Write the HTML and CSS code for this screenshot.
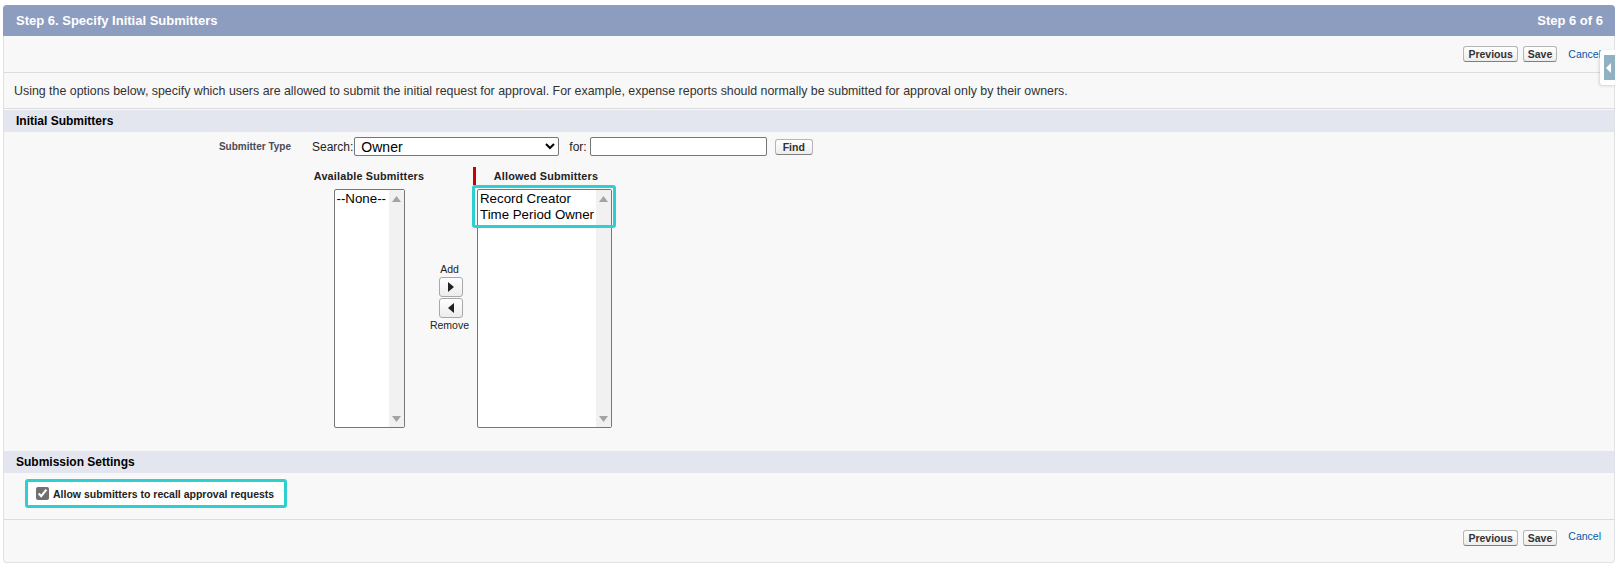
FILE: index.html
```html
<!DOCTYPE html>
<html lang="en">
<head>
    <meta charset="UTF-8">
    <title>Step 6. Specify Initial Submitters</title>
    <link rel="stylesheet" href="styles.css">
</head>
<body>
    <div class="wizard">
        <div class="wizard-head">
            <span>Step 6. Specify Initial Submitters</span>
            <span>Step 6 of 6</span>
        </div>

        <div class="actions">
            <button class="btn">Previous</button>
            <button class="btn">Save</button>
            <a class="cancel" href="#">Cancel</a>
        </div>

        <div class="intro">
            Using the options below, specify which users are allowed to submit the initial request for approval. For example, expense reports should normally be submitted for approval only by their owners.
        </div>

        <div class="section-head">Initial Submitters</div>
        <div class="section-body">
            <div class="field-row">
                <div class="field-label">Submitter Type</div>
                <div class="field-data">
                    <div class="search-line">
                        <label for="search">Search:</label>
                        <select id="search" class="search-select">
                            <option>Owner</option>
                        </select>
                        <label for="for-text" class="for-label">for:</label>
                        <input id="for-text" class="for-input" type="text">
                        <button class="btn btn-find">Find</button>
                    </div>

                    <div class="dual-list">
                        <div class="col-avail">
                            <div class="list-title">Available Submitters</div>
                            <div class="listbox listbox-avail">
                                <div class="list-items">
                                    <div>--None--</div>
                                </div>
                                <div class="list-scroll">
                                    <svg width="9" height="6" viewBox="0 0 9 6"><path d="M0 6 L4.5 0 L9 6 Z" fill="#a3a3a3"/></svg>
                                    <svg width="9" height="6" viewBox="0 0 9 6"><path d="M0 0 L4.5 6 L9 0 Z" fill="#a3a3a3"/></svg>
                                </div>
                            </div>
                        </div>

                        <div class="col-move">
                            <div class="move-label">Add</div>
                            <button class="move-btn" title="Add">
                                <svg width="6" height="10" viewBox="0 0 6 10"><path d="M0 0 L6 5 L0 10 Z" fill="#222"/></svg>
                            </button>
                            <button class="move-btn" title="Remove">
                                <svg width="6" height="10" viewBox="0 0 6 10"><path d="M6 0 L0 5 L6 10 Z" fill="#222"/></svg>
                            </button>
                            <div class="move-label">Remove</div>
                        </div>

                        <div class="col-allowed">
                            <div class="list-title required">Allowed Submitters</div>
                            <div class="listbox listbox-allowed">
                                <div class="list-items">
                                    <div>Record Creator</div>
                                    <div>Time Period Owner</div>
                                </div>
                                <div class="list-scroll">
                                    <svg width="9" height="6" viewBox="0 0 9 6"><path d="M0 6 L4.5 0 L9 6 Z" fill="#a3a3a3"/></svg>
                                    <svg width="9" height="6" viewBox="0 0 9 6"><path d="M0 0 L4.5 6 L9 0 Z" fill="#a3a3a3"/></svg>
                                </div>
                                <div class="highlight highlight-list"></div>
                            </div>
                        </div>
                    </div>
                </div>
            </div>
        </div>

        <div class="section-head">Submission Settings</div>
        <div class="settings-body">
            <label class="highlight-check">
                <input type="checkbox" checked>
                <span>Allow submitters to recall approval requests</span>
            </label>
        </div>

        <div class="actions actions-bottom">
            <button class="btn">Previous</button>
            <button class="btn">Save</button>
            <a class="cancel" href="#">Cancel</a>
        </div>

        <div class="side-tab">
            <div class="side-tab-inner">
                <svg width="5" height="10" viewBox="0 0 5 10"><path d="M5 0 L0 5 L5 10 Z" fill="#fff"/></svg>
            </div>
        </div>
    </div>
</body>
</html>
```

FILE: styles.css
```css
:root {
    --head: #8d9dc0;
    --section: #e3e6ef;
    --panel: #f8f8f8;
    --line: #dcdcdc;
    --teal: #2ecfd0;
    --link: #015ba7;
}

body {
    margin: 0;
    padding: 5px 5px 0 3px;
    font-family: "Liberation Sans", Arial, sans-serif;
    font-size: 12px;
    color: #333;
    background-color: #fff;
}

.wizard {
    position: relative;
    height: 558px;
    box-sizing: border-box;
    border: 1px solid #e0e2e5;
    border-top: none;
    border-radius: 4px;
    background-color: var(--panel);
}

.wizard-head {
    height: 31px;
    margin: 0 -1px;
    padding: 0 12px 0 13px;
    display: flex;
    justify-content: space-between;
    align-items: center;
    background-color: var(--head);
    color: #fff;
    font-size: 13px;
    font-weight: bold;
    border-radius: 4px 4px 0 0;
}

.actions {
    height: 36px;
    padding-right: 13px;
    display: flex;
    justify-content: flex-end;
    align-items: center;
    border-bottom: 1px solid var(--line);
}

.actions-bottom {
    height: 42px;
    align-items: flex-start;
    padding-top: 10px;
    box-sizing: border-box;
    border-bottom: none;
}

.btn {
    height: 16px;
    padding: 0 4px;
    margin-left: 5px;
    font-family: inherit;
    font-size: 10.5px;
    font-weight: bold;
    color: #333;
    border: 1px solid #b5b5b5;
    border-bottom-color: #7f7f7f;
    border-radius: 3px;
    background: linear-gradient(#fff, #ededed);
    cursor: pointer;
    line-height: 14px;
}

.cancel {
    margin-left: 11px;
    font-size: 10.5px;
    color: var(--link);
    text-decoration: none;
}

.intro {
    height: 35px;
    padding-left: 10px;
    display: flex;
    align-items: center;
    border-bottom: 1px solid var(--line);
    font-size: 12.4px;
    color: #333;
}

.section-head {
    height: 22px;
    padding-left: 12px;
    display: flex;
    align-items: center;
    background-color: var(--section);
    font-size: 12px;
    font-weight: bold;
    color: #000;
}

.intro + .section-head {
    margin-top: 1px;
}

.section-body {
    height: 319px;
    box-sizing: border-box;
    padding-top: 5px;
}

.field-row {
    display: flex;
}

.field-label {
    width: 296px;
    box-sizing: border-box;
    padding: 4px 9px 0 0;
    text-align: right;
    font-size: 10px;
    font-weight: bold;
    color: #4a4a56;
}

.field-data {
    padding-left: 12px;
}

.search-line {
    display: flex;
    align-items: center;
    height: 19px;
    color: #222;
}

.search-select {
    width: 205px;
    height: 19px;
    margin-left: 1px;
    padding: 0 0 0 2px;
    font-family: inherit;
    font-size: 14px;
    color: #000;
    border: 1px solid #767676;
    border-radius: 2px;
    background-color: #fff;
}

.for-label {
    margin-left: 10px;
}

.for-input {
    width: 177px;
    height: 19px;
    box-sizing: border-box;
    margin-left: 3px;
    border: 1px solid #767676;
    border-radius: 2px;
    background-color: #fff;
}

.btn-find {
    margin-left: 8px;
    padding: 0 7px;
}

.dual-list {
    display: flex;
    margin-top: 11px;
}

.list-title {
    height: 18px;
    line-height: 18px;
    font-size: 10.8px;
    font-weight: bold;
    color: #222;
    letter-spacing: 0.2px;
    margin-bottom: 4px;
}

.col-avail {
    width: 114px;
    text-align: center;
}

.col-avail .listbox {
    margin: 0 auto;
}

.listbox {
    position: relative;
    display: flex;
    height: 239px;
    box-sizing: border-box;
    border: 1px solid #767676;
    border-radius: 2px;
    background-color: #fff;
    text-align: left;
}

.listbox-avail {
    width: 71px;
}

.listbox-allowed {
    width: 135px;
    margin-left: 4px;
}

.list-items {
    flex: 1;
    padding: 1px 0 0 2px;
    font-size: 13.3px;
    line-height: 16px;
    color: #000;
    white-space: nowrap;
}

.list-scroll {
    width: 15px;
    display: flex;
    flex-direction: column;
    justify-content: space-between;
    align-items: center;
    padding: 6px 0 5px;
    background-color: #f1f1f1;
}

.col-move {
    width: 47px;
    padding-top: 95px;
    display: flex;
    flex-direction: column;
    align-items: center;
}

.move-label {
    height: 15px;
    line-height: 15px;
    font-size: 10.5px;
    color: #222;
}

.move-label:last-child {
    height: 13px;
    line-height: 13px;
}

.move-btn {
    width: 24px;
    height: 20px;
    margin: 0 0 1px 2px;
    padding: 0;
    display: flex;
    justify-content: center;
    align-items: center;
    border: 1px solid #a8a8a8;
    border-radius: 3px;
    background: linear-gradient(#fff, #ececec);
}

.move-label + .move-btn {
    margin-top: 0;
}

.col-allowed .required {
    border-left: 3px solid #c00;
    text-align: center;
    padding-left: 4px;
}

.highlight {
    border: 3px solid var(--teal);
    border-radius: 3px;
}

.highlight-list {
    position: absolute;
    left: -6px;
    top: -5px;
    width: 144px;
    height: 43px;
    box-sizing: border-box;
}

.settings-body {
    height: 47px;
    box-sizing: border-box;
    padding: 6px 0 0 21px;
    border-bottom: 1px solid var(--line);
}

.highlight-check {
    display: inline-flex;
    align-items: center;
    height: 29px;
    width: 262px;
    box-sizing: border-box;
    padding: 0 8px;
    border: 3px solid var(--teal);
    border-radius: 3px;
    background-color: #fff;
    font-size: 10.5px;
    font-weight: bold;
    color: #222;
}

.highlight-check input {
    width: 13px;
    height: 13px;
    margin: 0 4px 0 0;
    accent-color: #707070;
}

.side-tab {
    position: absolute;
    top: 45px;
    right: -1px;
    width: 15px;
    height: 35px;
    box-sizing: border-box;
    padding: 5px 0 5px 4px;
    background-color: #fff;
    border-radius: 3px 0 0 3px;
    box-shadow: -1px 1px 3px rgba(0, 0, 0, 0.15);
}

.side-tab-inner {
    height: 100%;
    display: flex;
    align-items: center;
    padding-left: 2px;
    background-color: #8fb1c1;
}
```
